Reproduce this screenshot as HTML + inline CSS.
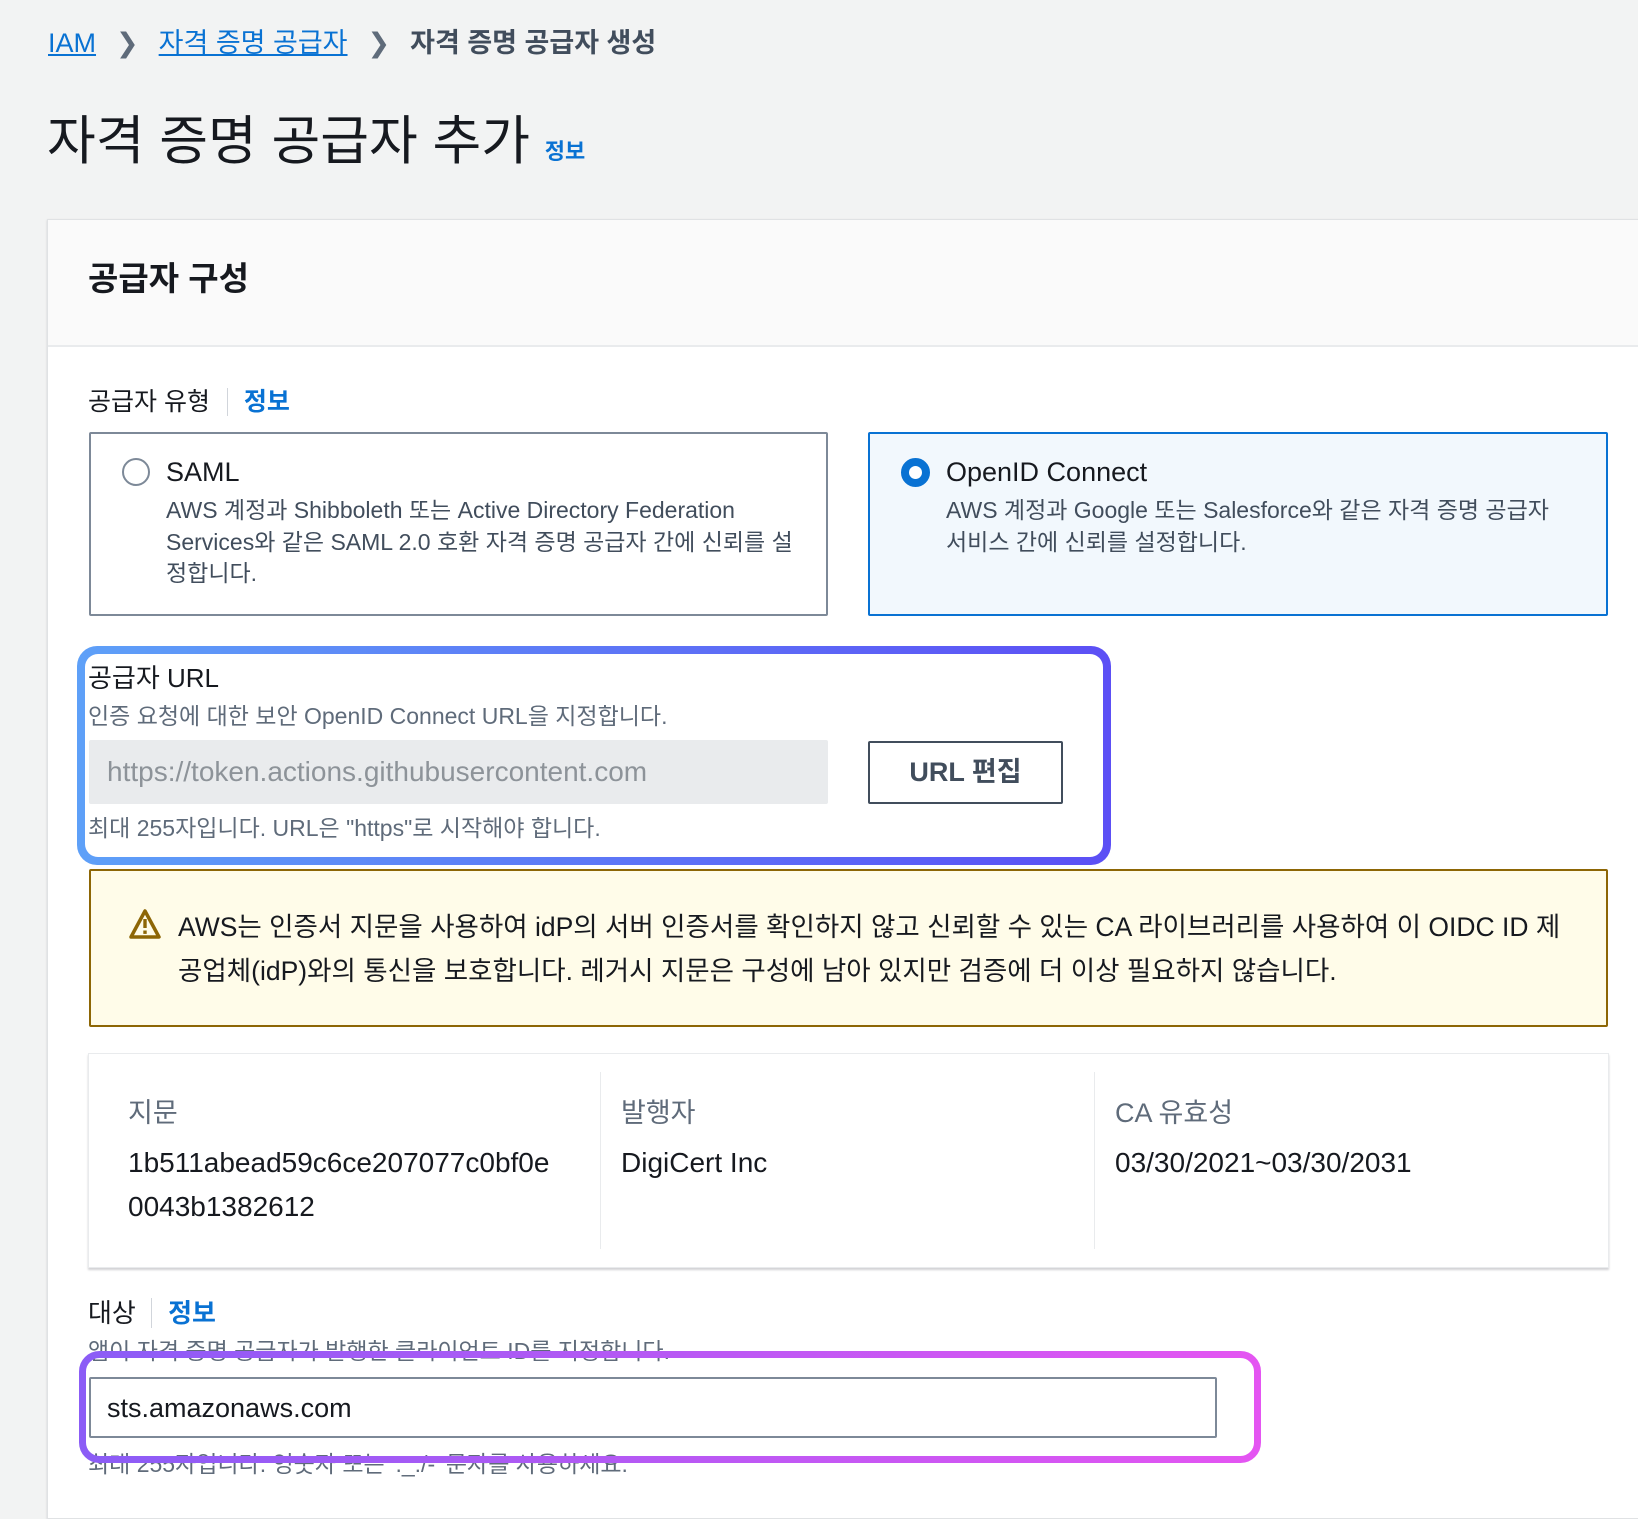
<!DOCTYPE html>
<html><head><meta charset="utf-8"><style>
*{margin:0;padding:0;box-sizing:border-box}
body{width:1638px;height:1502px;overflow:hidden;background:#f2f3f3;font-family:"Liberation Sans","Noto Sans CJK KR",sans-serif;color:#16191f;position:relative}
.a{position:absolute;white-space:nowrap}
.lnk{color:#0972d3;text-decoration:underline}
.info{color:#0972d3;font-weight:bold}
.sub{color:#5f6b7a}
</style></head><body>
<div class="a" style="left:48px;top:26px;font-size:27px;line-height:34px">
<span class="lnk">IAM</span><span style="color:#5f6b7a;margin:0 20px">&#x276F;</span><span class="lnk">자격 증명 공급자</span><span style="color:#5f6b7a;margin:0 20px">&#x276F;</span><span style="color:#414d5c;font-weight:bold">자격 증명 공급자 생성</span></div>
<div class="a" style="left:47px;top:110px;font-size:53px;line-height:64px">자격 증명 공급자 추가 <span class="info" style="font-size:22px">정보</span></div>

<div class="a" style="left:47px;top:219px;width:1600px;height:1300px;background:#fff;border:1px solid #e0e2e4;box-shadow:0 1px 2px rgba(0,7,22,.15)"></div>
<div class="a" style="left:48px;top:220px;width:1600px;height:127px;background:#fafafa;border-bottom:2px solid #e9ebed"></div>
<div class="a" style="left:88px;top:259px;font-size:33px;font-weight:bold;line-height:40px">공급자 구성</div>

<div class="a" style="left:88px;top:386px;font-size:25px;line-height:32px">공급자 유형 <span style="border-left:1px solid #d1d5db;margin-left:10px;padding-left:16px" class="info">정보</span></div>

<div class="a" style="left:89px;top:432px;width:739px;height:184px;border:2px solid #7d8998;border-radius:2px;background:#fff"></div>
<div class="a" style="left:122px;top:458px;width:28px;height:28px;border:2px solid #7d8998;border-radius:50%"></div>
<div class="a" style="left:166px;top:455px;font-size:27px;line-height:34px">SAML</div>
<div class="a" style="left:166px;top:495px;font-size:23px;line-height:31.5px;color:#414d5c">AWS 계정과 Shibboleth 또는 Active Directory Federation<br>Services와 같은 SAML 2.0 호환 자격 증명 공급자 간에 신뢰를 설<br>정합니다.</div>

<div class="a" style="left:868px;top:432px;width:740px;height:184px;border:2px solid #0972d3;border-radius:2px;background:#f2f8fd"></div>
<div class="a" style="left:901px;top:458px;width:29px;height:29px;border:8px solid #0972d3;border-radius:50%;background:#fff"></div>
<div class="a" style="left:946px;top:455px;font-size:27px;line-height:34px">OpenID Connect</div>
<div class="a" style="left:946px;top:495px;font-size:23px;line-height:31.5px;color:#414d5c">AWS 계정과 Google 또는 Salesforce와 같은 자격 증명 공급자<br>서비스 간에 신뢰를 설정합니다.</div>

<div class="a" style="left:77px;top:646px;width:1034px;height:219px;border-radius:20px;background:linear-gradient(90deg,#5ea0f8,#5c4ff5)"></div>
<div class="a" style="left:85px;top:654px;width:1018px;height:203px;border-radius:13px;background:#fff"></div>
<div class="a" style="left:88px;top:662px;font-size:26px;line-height:32px">공급자 URL</div>
<div class="a" style="left:88px;top:701px;font-size:23px;line-height:30px;color:#5f6b7a">인증 요청에 대한 보안 OpenID Connect URL을 지정합니다.</div>
<div class="a" style="left:89px;top:740px;width:739px;height:64px;background:#e9ebed;border-radius:2px"></div>
<div class="a" style="left:107px;top:755px;font-size:28px;line-height:34px;color:#8d9399">https://token.actions.githubusercontent.com</div>
<div class="a" style="left:868px;top:741px;width:195px;height:63px;border:2px solid #414d5c;border-radius:2px;background:#fff;font-size:27px;font-weight:bold;color:#414d5c;text-align:center;line-height:59px">URL 편집</div>
<div class="a" style="left:88px;top:813px;font-size:23px;line-height:30px;color:#5f6b7a">최대 255자입니다. URL은 "https"로 시작해야 합니다.</div>

<div class="a" style="left:89px;top:869px;width:1519px;height:158px;background:#fffce9;border:2px solid #8d6605;border-radius:2px"></div>
<svg class="a" style="left:128px;top:908px" width="34" height="32" viewBox="0 0 34 32"><path d="M17 3 L31 29 H3 Z" fill="none" stroke="#8d6605" stroke-width="3.5" stroke-linejoin="round"/><rect x="15.3" y="11" width="3.4" height="9" fill="#8d6605"/><rect x="15.3" y="22.5" width="3.4" height="3.4" fill="#8d6605"/></svg>
<div class="a" style="left:178px;top:905px;font-size:26.5px;line-height:44px">AWS는 인증서 지문을 사용하여 idP의 서버 인증서를 확인하지 않고 신뢰할 수 있는 CA 라이브러리를 사용하여 이 OIDC ID 제<br>공업체(idP)와의 통신을 보호합니다. 레거시 지문은 구성에 남아 있지만 검증에 더 이상 필요하지 않습니다.</div>

<div class="a" style="left:88px;top:1053px;width:1521px;height:215px;background:#fff;border:1px solid #e9ebed;box-shadow:0 2px 2px rgba(0,7,22,.18)"></div>
<div class="a" style="left:600px;top:1072px;width:1px;height:177px;background:#e9ebed"></div>
<div class="a" style="left:1094px;top:1072px;width:1px;height:177px;background:#e9ebed"></div>
<div class="a" style="left:128px;top:1096px;font-size:27px;line-height:34px;color:#5f6b7a">지문</div>
<div class="a" style="left:128px;top:1141px;font-size:28px;line-height:44px">1b511abead59c6ce207077c0bf0e<br>0043b1382612</div>
<div class="a" style="left:621px;top:1096px;font-size:27px;line-height:34px;color:#5f6b7a">발행자</div>
<div class="a" style="left:621px;top:1141px;font-size:28px;line-height:44px">DigiCert Inc</div>
<div class="a" style="left:1115px;top:1096px;font-size:27px;line-height:34px;color:#5f6b7a">CA 유효성</div>
<div class="a" style="left:1115px;top:1141px;font-size:28px;line-height:44px">03/30/2021~03/30/2031</div>

<div class="a" style="left:88px;top:1297px;font-size:26px;line-height:32px">대상 <span style="border-left:1px solid #d1d5db;margin-left:8px;padding-left:16px" class="info">정보</span></div>
<div class="a" style="left:88px;top:1336px;font-size:23px;line-height:30px;color:#5f6b7a">앱이 자격 증명 공급자가 발행한 클라이언트 ID를 지정합니다.</div>
<div class="a" style="left:88px;top:1449px;font-size:23px;line-height:30px;color:#5f6b7a">최대 255자입니다. 영숫자 또는 '._:/-' 문자를 사용하세요.</div>
<svg class="a" style="left:79px;top:1351px" width="1182" height="112" viewBox="0 0 1182 112"><defs><linearGradient id="g" x1="0" x2="1" y1="0" y2="0"><stop offset="0" stop-color="#8b5cf6"/><stop offset="1" stop-color="#e455f2"/></linearGradient></defs><rect x="3.5" y="3.5" width="1175" height="105" rx="17" fill="none" stroke="url(#g)" stroke-width="7"/></svg>
<div class="a" style="left:89px;top:1377px;width:1128px;height:61px;border:2px solid #7d8998;border-radius:2px;background:#fff"></div>
<div class="a" style="left:107px;top:1391px;font-size:27px;line-height:34px">sts.amazonaws.com</div>
</body></html>
